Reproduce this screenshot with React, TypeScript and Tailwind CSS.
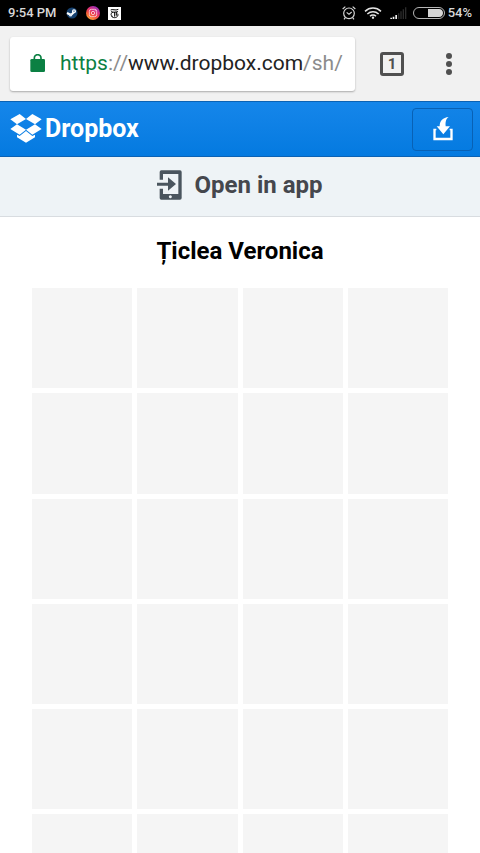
const tiles = Array.from({ length: 24 }, (_, i) => i);

function SteamIcon() {
  return (
    <svg className="size-3" viewBox="0 0 24 24" aria-hidden="true">
      <circle cx="12" cy="12" r="11" fill="#15406e" />
      <path d="M2 12l8 4 6-6" fill="none" stroke="#fff" strokeWidth="4" />
      <circle cx="16" cy="8.5" r="4" fill="#fff" />
      <circle cx="9" cy="16" r="3" fill="#e4edf6" />
      <circle cx="16" cy="8.5" r="1.8" fill="#7e9cbb" />
    </svg>
  );
}

function InstagramIcon() {
  return (
    <svg className="size-3.5" viewBox="0 0 42 42" aria-hidden="true">
      <defs>
        <linearGradient id="insta" x1="0.2" y1="1" x2="0.8" y2="0">
          <stop offset="0" stopColor="#fdb53c" />
          <stop offset="0.35" stopColor="#f4533a" />
          <stop offset="0.65" stopColor="#d92c7f" />
          <stop offset="1" stopColor="#8a35c4" />
        </linearGradient>
      </defs>
      <circle cx="21" cy="21" r="21" fill="url(#insta)" />
      <rect x="10" y="10" width="22" height="22" rx="6" fill="none" stroke="#ffd9e2" strokeWidth="2.5" />
      <circle cx="21" cy="21" r="5" fill="none" stroke="#ffd9e2" strokeWidth="2.5" />
      <circle cx="27.5" cy="14.5" r="1.5" fill="#ffd9e2" />
    </svg>
  );
}

function NewsIcon() {
  return (
    <svg className="size-[13px]" viewBox="0 0 39 39" aria-hidden="true">
      <rect width="39" height="39" fill="#fff" />
      <path
        d="M8 9c5-4 14 3 23-2M9 14c6 3 14 1 21 0M15 15c-7 3-8 12-1 13M20 15v14M29 20c3 7-3 12-9 12-5 0-8-2-10-5M25 15v11"
        fill="none"
        stroke="#000"
        strokeWidth="3"
      />
    </svg>
  );
}

function AlarmIcon() {
  return (
    <svg className="size-3.5" viewBox="0 0 42 42" fill="none" stroke="#d8d8d8" strokeWidth="3.5" aria-hidden="true">
      <circle cx="21" cy="22" r="16" />
      <path d="M14 19l7 6 8-7M2 9l8-7M40 9l-8-7M10 35l-4 5M32 35l4 5" />
    </svg>
  );
}

function WifiIcon() {
  return (
    <svg className="h-3 w-[18px]" viewBox="0 0 54 36" fill="none" stroke="#e4e4e4" strokeWidth="4.5" aria-hidden="true">
      <path d="M3 13c14-13 34-13 48 0M10 21c10-9 24-9 34 0M18 28c5-5 13-5 18 0" />
      <circle cx="27" cy="32" r="3.5" fill="#e4e4e4" stroke="none" />
    </svg>
  );
}

function SignalIcon() {
  return (
    <svg className="h-3 w-[17px]" viewBox="0 0 51 36" aria-hidden="true">
      <path d="M1 32h5v4H1zM8 29h5v7H8zM16 24h5v12h-5z" fill="#f0f0f0" />
      <path d="M24 19h4v17h-4zM31 13h4v23h-4zM38 7h4v29h-4zM45 1h4v35h-4z" fill="#2c2c2c" />
    </svg>
  );
}

function BatteryIcon() {
  return (
    <svg className="h-3 w-8" viewBox="0 0 96 36" aria-hidden="true">
      <rect x="1.5" y="1.5" width="93" height="33" rx="16.5" fill="none" stroke="#b5b5b5" strokeWidth="3" />
      <path d="M45 6h33c16 0 16 24 0 24H45z" fill="#d6d6d6" />
    </svg>
  );
}

function LockIcon() {
  return (
    <svg className="h-5 w-4 shrink-0" viewBox="0 0 48 60" aria-hidden="true">
      <path d="M13 20v-8a10 10 0 0 1 20 0v8" fill="none" stroke="#0b8043" strokeWidth="5" />
      <rect x="1" y="15" width="44" height="39" rx="4" fill="#0b8043" />
    </svg>
  );
}

function DropboxIcon() {
  return (
    <svg className="h-[31px] w-8" viewBox="31 46 96 93" fill="#fff" aria-hidden="true">
      <path d="M60 46l19 15-27 16-20-15zM98 46l28 16-20 15-27-16zM52 77l27 16-19 15-28-17zM106 77l20 14-28 17-19-15z" />
      <path d="M79 97l19 15 8-4v8l-27 16-27-16v-8l8 4z" />
    </svg>
  );
}

function DownloadIcon() {
  return (
    <svg className="h-[26px] w-5" viewBox="0 0 60 78" fill="#fff" aria-hidden="true">
      <path d="M47 3c-9 6-10 16-9 28h13L31 55 11 31h9C20 14 30 5 47 3z" />
      <path d="M1 38h9v5H8v22h44V43h-2v-5h9v35H1z" />
    </svg>
  );
}

function OpenInAppIcon() {
  return (
    <svg className="h-[30px] w-[25px]" viewBox="0 0 75 90" fill="#4a555e" aria-hidden="true">
      <path
        fillRule="evenodd"
        d="M13 1h56a5 5 0 0 1 5 5v78a5 5 0 0 1-5 5H13a5 5 0 0 1-5-5V56h10v16h46V12H18v17H8V6a5 5 0 0 1 5-5zM40 76a4.500 4.500 0 1 0 .1 0z"
      />
      <path d="M0 38h33V22l24 20-24 20V47H0z" />
    </svg>
  );
}

function StatusBar() {
  return (
    <div className="flex h-[26px] shrink-0 items-center justify-between bg-black px-2 text-[13px] font-medium text-[#d8d8d8]">
      <div className="flex items-center gap-2">
        <span>9:54 PM</span>
        <span className="flex items-center gap-2 pl-px">
          <SteamIcon />
          <InstagramIcon />
          <NewsIcon />
        </span>
      </div>
      <div className="flex items-center gap-1.5">
        <div className="flex items-center gap-2">
          <AlarmIcon />
          <WifiIcon />
          <SignalIcon />
        </div>
        <div className="flex items-center gap-[3px]">
          <BatteryIcon />
          <span>54%</span>
        </div>
      </div>
    </div>
  );
}

function BrowserBar() {
  return (
    <div className="flex h-[75px] shrink-0 items-center bg-[#f1f1f1] pl-2.5 pr-[17px]">
      <button
        type="button"
        aria-label="Edit address"
        className="flex h-[54px] min-w-0 flex-1 items-center gap-3.5 rounded-[3px] bg-white pl-5 shadow-[0_1px_2px_rgba(0,0,0,0.3)]"
      >
        <LockIcon />
        <span className="whitespace-nowrap text-[21px] text-[#8c8c8c]">
          <span className="text-[#0b8043]">https</span>://<span className="text-[#222]">www.dropbox.com</span>/sh/
        </span>
      </button>
      <button
        type="button"
        aria-label="Tabs"
        className="ml-[25px] flex size-6 items-center justify-center rounded-[3px] border-[3px] border-[#505050] pt-px text-[15px] leading-none font-bold text-[#505050]"
      >
        1
      </button>
      <button type="button" aria-label="Menu" className="ml-[31px] flex w-7 flex-col items-center gap-0.5">
        <span className="size-1.5 rounded-full bg-[#505050]" />
        <span className="size-1.5 rounded-full bg-[#505050]" />
        <span className="size-1.5 rounded-full bg-[#505050]" />
      </button>
    </div>
  );
}

function DropboxHeader() {
  return (
    <header className="flex h-14 shrink-0 items-center justify-between border-y border-[#0b62b4] bg-linear-to-b from-[#1586ea] to-[#047ae0] pl-2.5 pr-[7px]">
      <a href="#" className="flex items-center gap-[3px] text-[25px] font-bold text-white">
        <DropboxIcon />
        Dropbox
      </a>
      <button
        type="button"
        aria-label="Download"
        className="flex h-[43px] w-[61px] items-center justify-center rounded border border-[#0861b5] bg-linear-to-b from-[#1283e7] to-[#057be1]"
      >
        <DownloadIcon />
      </button>
    </header>
  );
}

export default function App() {
  return (
    <div className="flex h-screen flex-col overflow-hidden bg-white font-[Roboto,sans-serif]">
      <StatusBar />
      <BrowserBar />
      <DropboxHeader />
      <a
        href="#"
        className="flex h-[60px] shrink-0 items-center justify-center gap-3 border-b border-[#d8dce0] bg-[#eef3f6] pb-1 text-[24px] font-bold text-[#45474d]"
      >
        <OpenInAppIcon />
        Open in app
      </a>
      <main className="min-h-0 flex-1 overflow-y-auto px-8 [scrollbar-width:none]">
        <h1 className="pb-5 pt-[17px] text-center text-[24px] leading-[34px] font-bold text-black">Țiclea Veronica</h1>
        <div className="grid grid-cols-4 gap-[5px]">
          {tiles.map((t) => (
            <div key={t} className="aspect-square bg-[#f5f5f5]" />
          ))}
        </div>
      </main>
    </div>
  );
}
